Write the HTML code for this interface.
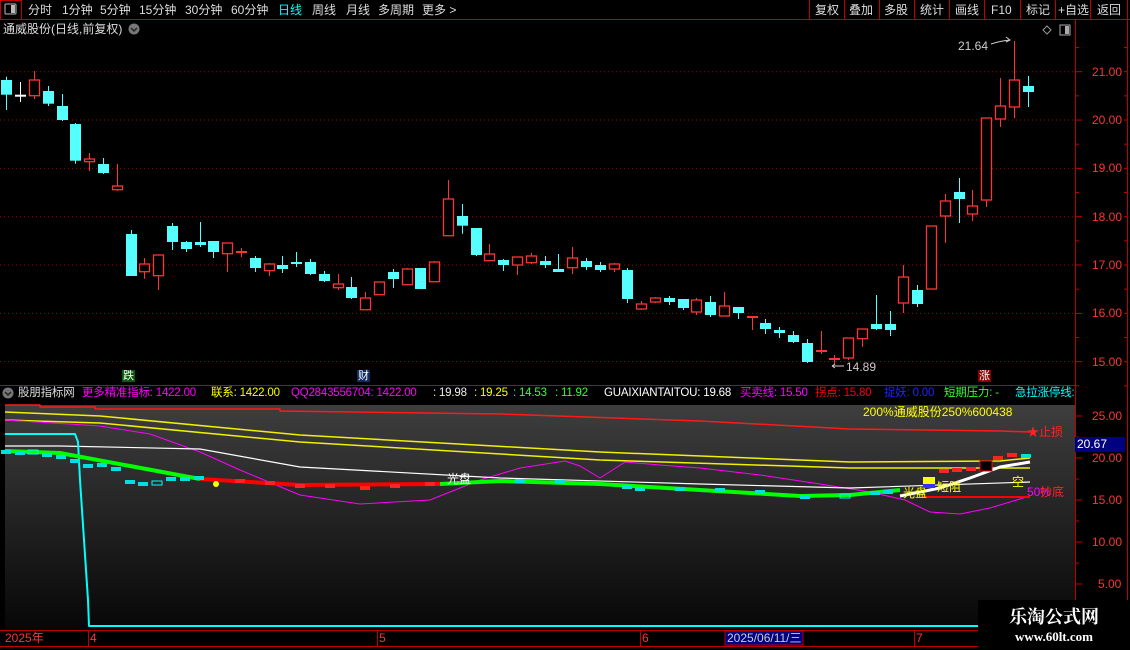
<!DOCTYPE html>
<html><head><meta charset="utf-8">
<style>
*{margin:0;padding:0;box-sizing:border-box}
body{width:1130px;height:650px;background:#000;overflow:hidden;position:relative;font-family:"Liberation Sans","Noto Sans CJK SC",sans-serif;font-size:12px;color:#ddd}
.a{position:absolute;white-space:nowrap;line-height:14px}
.h{font-size:11.5px;letter-spacing:-0.2px}
</style></head><body>
<svg width="1130" height="650" style="position:absolute;left:0;top:0" id="s">
<defs><linearGradient id="g" x1="0" y1="0" x2="0" y2="1"><stop offset="0" stop-color="#3e3e3e"/><stop offset="1" stop-color="#070707"/></linearGradient></defs>
<line x1="0" y1="19.5" x2="1130" y2="19.5" stroke="#c00000"/>
<rect x="0.5" y="0.5" width="21" height="19" fill="none" stroke="#c00000"/>
<rect x="5" y="4" width="11" height="10" fill="none" stroke="#bbb" rx="1"/><rect x="11" y="5" width="4" height="8" fill="#bbb"/>
<g stroke="#c00000"><line x1="809.5" y1="0" x2="809.5" y2="19"/><line x1="844.5" y1="0" x2="844.5" y2="19"/><line x1="879.5" y1="0" x2="879.5" y2="19"/><line x1="914.5" y1="0" x2="914.5" y2="19"/><line x1="949.5" y1="0" x2="949.5" y2="19"/><line x1="984.5" y1="0" x2="984.5" y2="19"/><line x1="1020.5" y1="0" x2="1020.5" y2="19"/><line x1="1055.5" y1="0" x2="1055.5" y2="19"/><line x1="1090.5" y1="0" x2="1090.5" y2="19"/><line x1="1127.5" y1="0" x2="1127.5" y2="650"/></g>
<line x1="1075.5" y1="19" x2="1075.5" y2="630" stroke="#c00000"/>
<circle cx="134" cy="29" r="5.5" fill="#777"/><path d="M131 28l3 3 3-3" stroke="#222" stroke-width="1.5" fill="none"/>
<path d="M1047 26l4 4-4 4-4-4z" fill="none" stroke="#999"/>
<rect x="1060" y="25" width="10" height="10" fill="none" stroke="#aaa"/><rect x="1065" y="26" width="4" height="8" fill="#aaa"/>
<g id="grid" stroke="#a00000" stroke-dasharray="1,3"></g>
<g id="ax" stroke="#c00000"></g>
<g id="cd"></g>
<path d="M991 44 Q1000 41 1010 40" stroke="#ccc" fill="none"/><path d="M1006 37l4 3-4 2" stroke="#ccc" fill="none"/>
<path d="M832 366h12M832 366l3-2M832 366l3 2" stroke="#ccc" fill="none"/>
<line x1="0" y1="385.5" x2="1075" y2="385.5" stroke="#c00000"/>
<circle cx="8" cy="393" r="5.5" fill="#777"/><path d="M5 392l3 3 3-3" stroke="#222" stroke-width="1.5" fill="none"/>
<rect x="5" y="405" width="1070" height="224" fill="url(#g)"/>
<line x1="0" y1="630.5" x2="1130" y2="630.5" stroke="#c00000"/>
<line x1="0" y1="646.5" x2="978" y2="646.5" stroke="#c00000"/>
<g stroke="#c00000"><line x1="88.5" y1="631" x2="88.5" y2="646"/><line x1="377.5" y1="631" x2="377.5" y2="646"/><line x1="640.5" y1="631" x2="640.5" y2="646"/><line x1="914.5" y1="631" x2="914.5" y2="646"/></g>
<rect x="725" y="631" width="78" height="14" fill="#000080" stroke="#c00000"/>
<g fill="none" stroke-linejoin="round">
<polyline stroke="#ff1a1a" stroke-width="1.5" points="5,405 40,405 40,407 95,407 95,409 280,409 280,411 500,414 700,421 850,429 1000,431 1030,432"/>
<polyline stroke="#f0f000" stroke-width="1.5" points="5,412 100,416 300,435 600,452 850,462 1000,461 1030,458"/>
<polyline stroke="#f0f000" stroke-width="1.5" points="5,420 100,423 300,442 600,460 850,468 1030,468"/>
<polyline stroke="#ff00ff" stroke-width="1" points="5,420 100,426 150,434 200,452 240,470 300,495 360,504 430,500 480,480 520,468 565,461 580,466 600,478 625,462 660,465 700,468 760,475 820,484 870,492 905,500 930,512 960,514 990,508 1030,496"/>
<polyline stroke="#fff" stroke-width="1.2" points="5,446 60,446 200,449 300,467 500,478 700,484 850,488 1030,482"/>
<polyline stroke="#fff" stroke-width="3" points="900,496 940,488 970,478 1000,467 1030,462"/>
<polyline stroke="#00ffff" stroke-width="2" points="5,434 75,434 78,442 80,480 84,540 88,600 89,626 1075,626"/>
<polyline stroke="#00ff00" stroke-width="4" points="5,451 60,453 130,466 200,479"/>
<polyline stroke="#ff0000" stroke-width="4" points="200,479 300,485 440,484"/>
<polyline stroke="#00ff00" stroke-width="4" points="440,484 500,481 600,484 700,490 800,496 850,495 900,490"/>
<polyline stroke="#ff0000" stroke-width="2" points="923,497 1030,497"/>
</g>
<circle cx="216" cy="484" r="3" fill="#ff0"/>
<rect x="923" y="477" width="12" height="8" fill="#ff0"/><rect x="923" y="484" width="12" height="4" fill="#33f"/>
<rect x="980" y="461" width="12" height="10" fill="#000" stroke="#f00"/>
<g id="lc"></g>
</svg>

<div class="a" style="left:28px;top:3px">分时</div>
<div class="a" style="left:62px;top:3px">1分钟</div>
<div class="a" style="left:100px;top:3px">5分钟</div>
<div class="a" style="left:139px;top:3px">15分钟</div>
<div class="a" style="left:185px;top:3px">30分钟</div>
<div class="a" style="left:231px;top:3px">60分钟</div>
<div class="a" style="left:278px;top:3px;color:#0ff">日线</div>
<div class="a" style="left:312px;top:3px">周线</div>
<div class="a" style="left:346px;top:3px">月线</div>
<div class="a" style="left:378px;top:3px">多周期</div>
<div class="a" style="left:422px;top:3px">更多 &gt;</div>
<div class="a" style="left:815px;top:3px">复权</div>
<div class="a" style="left:849px;top:3px">叠加</div>
<div class="a" style="left:884px;top:3px">多股</div>
<div class="a" style="left:920px;top:3px">统计</div>
<div class="a" style="left:955px;top:3px">画线</div>
<div class="a" style="left:991px;top:3px">F10</div>
<div class="a" style="left:1026px;top:3px">标记</div>
<div class="a" style="left:1058px;top:3px">+自选</div>
<div class="a" style="left:1097px;top:3px">返回</div>
<div class="a" style="left:3px;top:22px">通威股份(日线,前复权)</div>
<div class="a" style="left:1092px;top:65px;color:#f33">21.00</div>
<div class="a" style="left:1092px;top:113px;color:#f33">20.00</div>
<div class="a" style="left:1092px;top:161px;color:#f33">19.00</div>
<div class="a" style="left:1092px;top:210px;color:#f33">18.00</div>
<div class="a" style="left:1092px;top:258px;color:#f33">17.00</div>
<div class="a" style="left:1092px;top:306px;color:#f33">16.00</div>
<div class="a" style="left:1092px;top:355px;color:#f33">15.00</div>
<div class="a" style="left:958px;top:39px;color:#ccc">21.64</div>
<div class="a" style="left:846px;top:360px;color:#ccc">14.89</div>
<div class="a" style="left:122px;top:370px;background:#0a5a0a;color:#fff;font-size:11px;line-height:12px;padding:0 1px">跌</div>
<div class="a" style="left:357px;top:370px;background:#102a60;color:#fff;font-size:11px;line-height:12px;padding:0 1px">财</div>
<div class="a" style="left:978px;top:370px;background:#800;color:#fff;font-size:11px;line-height:12px;padding:0 1px">涨</div>
<div class="a h" style="left:18px;top:386px;color:#ddd">股朋指标网</div>
<div class="a h" style="left:82px;top:386px;color:#f0f">更多精准指标: 1422.00</div>
<div class="a h" style="left:211px;top:386px;color:#ff0">联系: 1422.00</div>
<div class="a h" style="left:291px;top:386px;color:#f0f">QQ2843556704: 1422.00</div>
<div class="a h" style="left:433px;top:386px;color:#eee">: 19.98</div>
<div class="a h" style="left:474px;top:386px;color:#ff0">: 19.25</div>
<div class="a h" style="left:513px;top:386px;color:#3f3">: 14.53</div>
<div class="a h" style="left:555px;top:386px;color:#3f3">: 11.92</div>
<div class="a h" style="left:604px;top:386px;color:#fff">GUAIXIANTAITOU: 19.68</div>
<div class="a h" style="left:740px;top:386px;color:#f0f">买卖线: 15.50</div>
<div class="a h" style="left:815px;top:386px;color:#f00">拐点: 15.80</div>
<div class="a h" style="left:884px;top:386px;color:#22f">捉妖: 0.00</div>
<div class="a h" style="left:944px;top:386px;color:#3f3">短期压力: -</div>
<div class="a h" style="left:1015px;top:386px;color:#0ff;width:60px;overflow:hidden">急拉涨停线: 0</div>
<div class="a" style="left:863px;top:405px;color:#ff0">200%通威股份250%600438</div>
<div class="a" style="left:1027px;top:425px;color:#f22">★止损</div>
<div class="a" style="left:1012px;top:475px;color:#ff0">空</div>
<div class="a" style="left:1027px;top:485px;color:#f0f">50%</div>
<div class="a" style="left:1040px;top:485px;color:#f22">抄底</div>
<div class="a" style="left:937px;top:480px;color:#ff0">短阻</div>
<div class="a" style="left:447px;top:472px;color:#fff">光盘</div>
<div class="a" style="left:903px;top:486px;color:#ff0">光盘</div>
<div class="a" style="left:1092px;top:409px;color:#f33">25.00</div>
<div class="a" style="left:1075px;top:437px;width:50px;height:15px;background:#000080;color:#fff;padding-left:2px">20.67</div>
<div class="a" style="left:1092px;top:451px;color:#f33">20.00</div>
<div class="a" style="left:1092px;top:493px;color:#f33">15.00</div>
<div class="a" style="left:1092px;top:535px;color:#f33">10.00</div>
<div class="a" style="left:1098px;top:577px;color:#f33">5.00</div>
<div class="a" style="left:5px;top:631px;color:#f33">2025年</div>
<div class="a" style="left:90px;top:631px;color:#f33">4</div>
<div class="a" style="left:379px;top:631px;color:#f33">5</div>
<div class="a" style="left:642px;top:631px;color:#f33">6</div>
<div class="a" style="left:727px;top:631px;color:#ccc">2025/06/11/三</div>
<div class="a" style="left:916px;top:631px;color:#f33">7</div>
<div style="position:absolute;left:978px;top:600px;width:152px;height:50px;background:#000;text-align:center">
<div style="font-family:'Liberation Serif','Noto Serif CJK SC',serif;font-weight:bold;font-size:18px;color:#fff;line-height:24px;margin-top:5px">乐淘公式网</div>
<div style="font-family:'Liberation Serif',serif;font-weight:bold;font-size:13px;color:#fff;line-height:16px">www.60lt.com</div>
</div>
<script>
var NS="http://www.w3.org/2000/svg";
function el(p,t,a){var e=document.createElementNS(NS,t);for(var k in a)e.setAttribute(k,a[k]);p.appendChild(e);return e;}
var grid=document.getElementById('grid'),ax=document.getElementById('ax');
for(var p=21;p>=15;p--){var y=71.7+(21-p)*48.33;el(grid,'line',{x1:0,x2:1075,y1:y,y2:y});}
for(var p=21.5;p>=14.5;p-=0.5){var y=71.7+(21-p)*48.33;el(ax,'line',{x1:1075,x2:p%1?1079:1082,y1:y,y2:y});el(ax,'line',{x1:1124,x2:1128,y1:y,y2:y});}
for(var v=25;v>=5;v-=2.5){var y=416+(25-v)*8.4;el(ax,'line',{x1:1075,x2:v%5?1079:1082,y1:y,y2:y});}
var D=[['c',80,94.7,76.7,110],['w',94.7,94.7,82,102],['r',80,95.7,71,99],['c',91,103.7,86,106],['c',106,120,94,121],['c',124,160.7,123,163.7],['r',159,161.7,153,171],['c',164,173,158,174],['r',186,189.7,164,190.7],['c',234,276,230,276],['r',264,271.7,258,278.7],['r',255,275.7,255,290],['c',226,242,223,250],['c',242,249,241,252],['c',242,245,222,247],['c',241,252,241,258],['r',243,253.7,243,272],['r',251,253,248,257],['c',258,268,256,272],['r',264,270.7,263,276],['c',265,269,256,273],['c',262,264,252,267],['c',262,274,259,275],['c',274,281,271,282],['r',284,287.7,274,290],['c',287,298,277,299],['r',298,309.7,292,309.7],['r',282,294.7,282,294.7],['c',272,279,269,288],['r',269,284.7,268,284.7],['c',268,289,268,289],['r',262,281.7,261,281.7],['r',199,235.7,180,235.7],['c',216,225.7,204,233.7],['c',228,255,228,256],['r',254,260.7,244,260.7],['c',260,265,259,271],['r',257,265,257,275],['r',256,262.7,253,264],['c',261,265,256,268],['c',269,272,254,272],['r',258,267.7,247,274],['c',261,267,258,270],['c',265,270,262,272],['r',264,269,263,272],['c',270,299,268,303],['r',304,309,301,310],['r',298,302,297,303],['c',298,302,296,305],['c',299,308,299,310],['r',300,312,298,315],['c',302,315,296,317],['r',306,316,292,316],['c',307,313,307,319],['r',316,318,316,330],['c',323,329,319,334],['c',330,333,327,338],['c',335,342,331,343],['c',343,362,339,363],['r',350,352,331,354],['r',358,360,355,364],['r',338,358,338,360],['r',329,338.7,329,347],['c',324,329,295,330],['c',324,330,311,336],['r',277,303,265,313],['c',290,304,285,307],['r',226,289,226,289],['r',201,216,194,243],['c',192,199,178,223],['r',206,214,190,221],['r',118,200,118,207],['r',106,119,78,127],['r',80,107,41,118],['c',86,92,76,107]];
var cd=document.getElementById('cd');
D.forEach(function(d,i){var x=Math.round(6.3+i*13.8)+0.5;var col=d[0]=='c'?'#55ffff':d[0]=='w'?'#fff':'#ff3333';
el(cd,'line',{x1:x,x2:x,y1:d[3],y2:d[4],stroke:col});
var h=d[2]-d[1];
if(d[0]=='c'){el(cd,'rect',{x:x-5.5,y:d[1],width:11,height:Math.max(h,2),fill:col});}
else if(h<2.5){el(cd,'rect',{x:x-5.5,y:d[1],width:11,height:2,fill:col});}
else{el(cd,'rect',{x:x-5,y:d[1],width:10,height:h,fill:'#000',stroke:col,'stroke-width':1.3});}
});
var lc=document.getElementById('lc');
var L=[[6,452,'c'],[20,453,'c'],[33,452,'o'],[47,455,'c'],[61,457,'c'],[75,461,'c'],[88,466,'c'],[102,465,'c'],[116,469,'c'],[130,482,'c'],[143,484,'c'],[157,483,'o'],[171,479,'c'],[185,479,'c'],[199,478,'c'],[240,481,'r'],[270,483,'r'],[300,486,'r'],[330,486,'r'],[365,488,'r'],[395,486,'r'],[430,484,'r'],[520,481,'c'],[560,482,'c'],[627,487,'c'],[640,489,'c'],[680,489,'c'],[720,490,'c'],[760,492,'c'],[805,497,'c'],[845,496,'o'],[875,493,'c'],[888,492,'c'],[944,471,'r'],[957,470,'r'],[971,469,'r'],[998,458,'r'],[1012,455,'r'],[1026,456,'c']];
L.forEach(function(d){var col=d[2]=='r'?'#ff2222':'#00e0e0';
if(d[2]=='o')el(lc,'rect',{x:d[0]-5,y:d[1]-2,width:10,height:4,fill:'none',stroke:'#0ff'});
else el(lc,'rect',{x:d[0]-5,y:d[1]-2,width:10,height:4,fill:col});});
</script>
</body></html>
